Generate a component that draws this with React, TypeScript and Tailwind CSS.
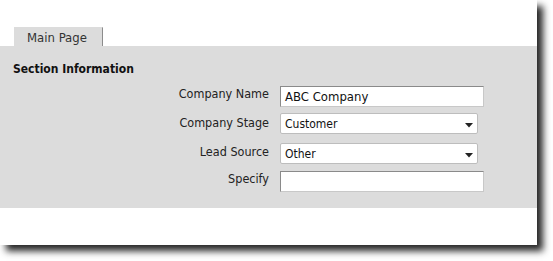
import React from "react";

const font = { fontFamily: '"DejaVu Sans Condensed", "DejaVu Sans", Tahoma, sans-serif' };

function Arrow() {
  return (
    <svg width="8" height="5" viewBox="0 0 8 5" className="absolute right-[4px] top-[9px]">
      <polygon points="0,0 8,0 4,4.5" fill="#222" />
    </svg>
  );
}

export default function App() {
  return (
    <div className="w-[553px] h-[261px] bg-white" style={font}>
      <div className="w-[537px] h-[245px] bg-white shadow-[6px_6px_7px_rgba(0,0,0,0.85)] flex flex-col">
        <div className="pt-[27px] pl-[14px] flex">
          <div className="w-[89px] h-[19px] bg-[#dcdcdc] border-r border-[#8c8c8c] border-t border-t-[#dcdcdc] pl-[13px] text-[13px] leading-[19px] text-[#333]">
            Main Page
          </div>
        </div>
        <div className="h-[162px] bg-[#dcdcdc] flex flex-col">
          <div className="pl-[13px] pt-[15px] text-[12px] leading-[16px] font-bold text-[#111]">
            Section Information
          </div>
          <div className="flex flex-col text-[12.5px] text-[#222]">
            <div className="flex mt-[9px]">
              <div className="w-[270px] text-right pr-[1px] pt-[0px] leading-[16px]">Company Name</div>
              <div className="ml-[10px] w-[204px] h-[21px] bg-white border border-t-[#8a8a8a] border-l-[#8a8a8a] border-r-[#c8c8c8] border-b-[#c8c8c8] pl-[4px] leading-[20px] text-[13px] text-[#111]">
                ABC Company
              </div>
            </div>
            <div className="flex mt-[6px]">
              <div className="w-[270px] text-right pr-[1px] pt-[2px] leading-[16px]">Company Stage</div>
              <div className="relative ml-[10px] w-[198px] h-[21px] bg-white border border-[#bdbdbd] rounded-[2px] pl-[4px] leading-[20px] text-[12px] text-[#111]">
                Customer
                <Arrow />
              </div>
            </div>
            <div className="flex mt-[9px]">
              <div className="w-[270px] text-right pr-[1px] pt-[1px] leading-[16px]">Lead Source</div>
              <div className="relative ml-[10px] w-[198px] h-[21px] bg-white border border-[#bdbdbd] rounded-[2px] pl-[4px] leading-[20px] text-[12px] text-[#111]">
                Other
                <Arrow />
              </div>
            </div>
            <div className="flex mt-[7px]">
              <div className="w-[270px] text-right pr-[1px] leading-[16px]">Specify</div>
              <div className="ml-[10px] w-[204px] h-[21px] bg-white border border-t-[#8a8a8a] border-l-[#8a8a8a] border-r-[#c8c8c8] border-b-[#c8c8c8]"></div>
            </div>
          </div>
        </div>
      </div>
    </div>
  );
}
